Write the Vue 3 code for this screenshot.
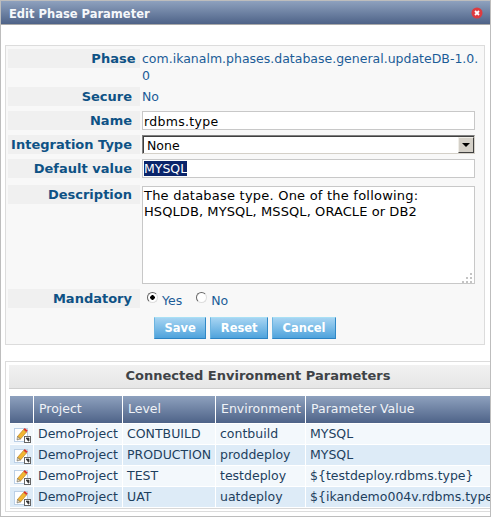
<script setup>
const rows = [
  { level: 'CONTBUILD', env: 'contbuild', value: 'MYSQL' },
  { level: 'PRODUCTION', env: 'proddeploy', value: 'MYSQL' },
  { level: 'TEST', env: 'testdeploy', value: '${testdeploy.rdbms.type}' },
  { level: 'UAT', env: 'uatdeploy', value: '${ikandemo004v.rdbms.type}' }
]
</script>

<template>
  <div class="dialog">
    <div class="titlebar">
      <span class="title">Edit Phase Parameter</span>
      <svg class="close" width="12" height="12" viewBox="0 0 12 12">
        <circle cx="6" cy="6" r="5.5" fill="#de3b3f" />
        <path d="M4 4l4 4M8 4l-4 4" stroke="#fff" stroke-width="1.8" />
      </svg>
    </div>

    <div class="body">
      <form class="panel" @submit.prevent>
        <div class="row phase-row">
          <label class="lbl">Phase&nbsp;</label>
          <div class="val">com.ikanalm.phases.database.general.updateDB-1.0.<br />0</div>
        </div>
        <div class="row secure-row">
          <label class="lbl">Secure</label>
          <div class="val">No</div>
        </div>
        <div class="row">
          <label class="lbl">Name</label>
          <div class="field"><input class="text" value="rdbms.type" /></div>
        </div>
        <div class="row">
          <label class="lbl">Integration Type</label>
          <div class="field">
            <div class="select">
              <span class="sel-text">None</span>
              <span class="sel-btn"><i></i></span>
            </div>
          </div>
        </div>
        <div class="row">
          <label class="lbl">Default value</label>
          <div class="field"><div class="text fake"><span class="hilite">MYSQL</span></div></div>
        </div>
        <div class="row desc-row">
          <label class="lbl">Description</label>
          <div class="field desc-field">
            <div class="area">
              <div class="line1">The database type. One of the following:</div>
              <div class="line2">HSQLDB, MYSQL, MSSQL, ORACLE or DB2</div>
              <svg class="grip" width="12" height="11" viewBox="0 0 12 11">
                <path d="M9 1h2v2H9zM5 5h2v2H5zM9 5h2v2H9zM1 9h2v2H1zM5 9h2v2H5zM9 9h2v2H9z" fill="#c4c4c4" />
              </svg>
            </div>
          </div>
        </div>
        <div class="row mand-row">
          <label class="lbl">Mandatory</label>
          <div class="radios">
            <span class="radio on"></span><span class="rtext yes">Yes</span>
            <span class="radio"></span><span class="rtext">No</span>
          </div>
        </div>
        <div class="buttons">
          <button type="button">Save</button>
          <button type="button">Reset</button>
          <button type="button">Cancel</button>
        </div>
      </form>

      <div class="panel2">
        <div class="panel2-head">Connected Environment Parameters</div>
        <div class="table">
          <div class="thead">
            <div class="c0"></div>
            <div class="c1">Project</div>
            <div class="c2">Level</div>
            <div class="c3">Environment</div>
            <div class="c4">Parameter Value</div>
          </div>
          <div v-for="(r, i) in rows" :key="r.level" class="tr" :class="{ alt: i % 2 }">
            <div class="c0">
              <svg width="17" height="16" viewBox="0 0 17 16">
                <rect x="0.5" y="1.5" width="13" height="13" fill="#fff" stroke="#bcd0e6" />
                <path d="M3.5 9.5L9.5 2.5l3 2.5-6 7z" fill="#f2b632" stroke="#b07a1c" stroke-width=".6" />
                <path d="M9.5 2.5l1.2-1.5 3 2.5-1.2 1.5z" fill="#d9342b" />
                <path d="M3.5 9.5L3 13l3.5-1z" fill="#e8d8b0" stroke="#555" stroke-width=".5" />
                <rect x="10.5" y="9.5" width="6" height="6" fill="#fff" stroke="#666" />
                <path d="M12 11h3v3zM12.5 11.5l2 3" fill="#333" stroke="#333" stroke-width=".7" />
              </svg>
            </div>
            <div class="c1">DemoProject</div>
            <div class="c2">{{ r.level }}</div>
            <div class="c3">{{ r.env }}</div>
            <div class="c4">{{ r.value }}</div>
          </div>
        </div>
      </div>
    </div>
  </div>
</template>

<style scoped>
.dialog {
  width: 491px;
  height: 517px;
  box-sizing: border-box;
  border: 1px solid #bdbdbd;
  overflow: hidden;
  background: #fff;
  font-family: "DejaVu Sans", Verdana, sans-serif;
  font-size: 12px;
}
.titlebar {
  height: 23px;
  display: flex;
  align-items: center;
  justify-content: space-between;
  padding: 0 7px 0 8px;
  background: linear-gradient(#8ea1be, #4e6388);
  border-bottom: 1px solid #a9a9a9;
}
.title {
  color: #f6f8fb;
  font-weight: bold;
  font-size: 11.5px;
  padding-top: 3px;
}
.body {
  padding: 20px 0 0 4px;
}
.panel {
  width: 480px;
  height: 300px;
  box-sizing: border-box;
  border: 1px solid #dcdcdc;
  background: #f8f8f8;
  padding: 3px 2px 0 2px;
  margin: 0;
}
.row {
  display: flex;
  margin-bottom: 5px;
}
.phase-row { margin-bottom: 0; height: 38px; }
.secure-row { height: 19px; margin-bottom: 5px; }
.desc-row { padding-top: 2px; }
.desc-field { padding-top: 1px; }
.lbl {
  width: 132px;
  height: 19px;
  flex: none;
  box-sizing: border-box;
  background: #f0f0f0;
  padding-right: 8px;
  text-align: right;
  font-weight: bold;
  font-size: 13px;
  line-height: 20px;
  color: #0e5285;
}
.phase-row .lbl { padding-right: 0; }
.val {
  padding: 1px 0 0 0;
  color: #1b5c97;
  font-size: 12.5px;
  line-height: 17px;
  margin-left: 2px;
}
.field { margin-left: 2px; }
.text {
  display: block;
  width: 333px;
  height: 19px;
  box-sizing: border-box;
  border: 1px solid #c8c8c8;
  background: #fff;
  padding: 1px 1px 0;
  margin: 0;
  font: 12.5px "DejaVu Sans", Verdana, sans-serif;
  line-height: 16px;
  color: #000;
  outline: none;
}
input.text { letter-spacing: 0.3px; }
.hilite {
  background: #0a246a;
  color: #fff;
}
.select {
  width: 333px;
  height: 19px;
  box-sizing: border-box;
  border: 1px solid #808080;
  border-right-color: #d4d0c8;
  border-bottom-color: #d4d0c8;
  box-shadow: inset 1px 1px 0 #404040;
  background: #fff;
  display: flex;
  justify-content: space-between;
}
.sel-text {
  padding: 1px 0 0 4px;
  font-size: 12.5px;
  line-height: 17px;
  color: #000;
}
.sel-btn {
  width: 16px;
  margin: 1px 0 0;
  box-sizing: border-box;
  background: #d4d0c8;
  border: 1px solid;
  border-color: #f0eee8 #404040 #404040 #f0eee8;
  display: flex;
  align-items: center;
  justify-content: center;
}
.sel-btn i {
  border: 4px solid transparent;
  border-top: 4px solid #000;
  border-bottom: 0;
}
.area {
  position: relative;
  width: 333px;
  height: 98px;
  box-sizing: border-box;
  border: 1px solid #c8c8c8;
  background: #fff;
  padding: 1px 1px;
  font-size: 13px;
  line-height: 16px;
  color: #000;
  white-space: nowrap;
}
.line1 { letter-spacing: 0.22px; }
.line2 { letter-spacing: 0.08px; }
.grip {
  position: absolute;
  right: 1px;
  bottom: 0;
}
.radios {
  display: flex;
  align-items: flex-start;
  padding: 3px 0 0 6px;
  margin-left: 1px;
  color: #1b5c97;
  font-size: 12.5px;
}
.radio {
  width: 11px;
  height: 11px;
  box-sizing: border-box;
  border: 1px solid;
  border-color: #666 #ddd #ddd #666;
  border-radius: 50%;
  background: #fff;
  margin-right: 4px;
}
.radio.on {
  background: radial-gradient(circle, #000 2px, #fff 2.5px);
}
.rtext { line-height: 17px; }
.yes { margin-right: 14px; }
.buttons {
  display: flex;
  justify-content: center;
  gap: 4px;
  margin-top: 8px;
}
.buttons button {
  height: 22px;
  padding: 0 9.5px;
  border: 1px solid;
  border-color: #a9e0f5 #3088c6 #2c83c3 #6cb4e0;
  background: linear-gradient(#a6d4f2, #4fa3dc);
  color: #fff;
  font: bold 11.5px "DejaVu Sans", Verdana, sans-serif;
}
.panel2 {
  margin-top: 16px;
  width: 506px;
  height: 151px;
  box-sizing: border-box;
  border: 1px solid #dcdcdc;
  padding: 3px;
}
.panel2-head {
  height: 23px;
  background: linear-gradient(#f1f1f1, #e6e6e6);
  border-bottom: 1px solid #cfcfcf;
  text-align: center;
  font-weight: bold;
  font-size: 13px;
  line-height: 22px;
  color: #3f4347;
}
.table {
  margin: 7px 0 0 1px;
  border-bottom: 1px solid #d8d8d8;
}
.thead, .tr {
  display: flex;
}
.thead > div, .tr > div {
  flex: none;
  box-sizing: border-box;
  border-right: 1px solid #fff;
  white-space: nowrap;
  font-size: 12.5px;
}
.thead > div {
  height: 28px;
  background: linear-gradient(#8ea1be, #4e6388);
  border-bottom: 1px solid #fff;
  color: #f0f3f7;
  line-height: 26px;
  padding-left: 5px;
}
.tr > div {
  height: 21px;
  background: #f3f8fc;
  border-bottom: 1px solid #fff;
  color: #1d3f5e;
  line-height: 20px;
  padding-left: 4px;
}
.tr.alt > div { background: #ddebf7; }
.c0 { width: 24px; }
.c1 { width: 89px; }
.c2 { width: 93px; }
.c3 { width: 90px; }
.c4 { width: 200px; }
.tr > .c0 { padding: 3px 0 0 4px; }
.c0 svg { display: block; }
</style>

<style>
html, body { margin: 0; background: #fff; overflow: hidden; }
</style>
